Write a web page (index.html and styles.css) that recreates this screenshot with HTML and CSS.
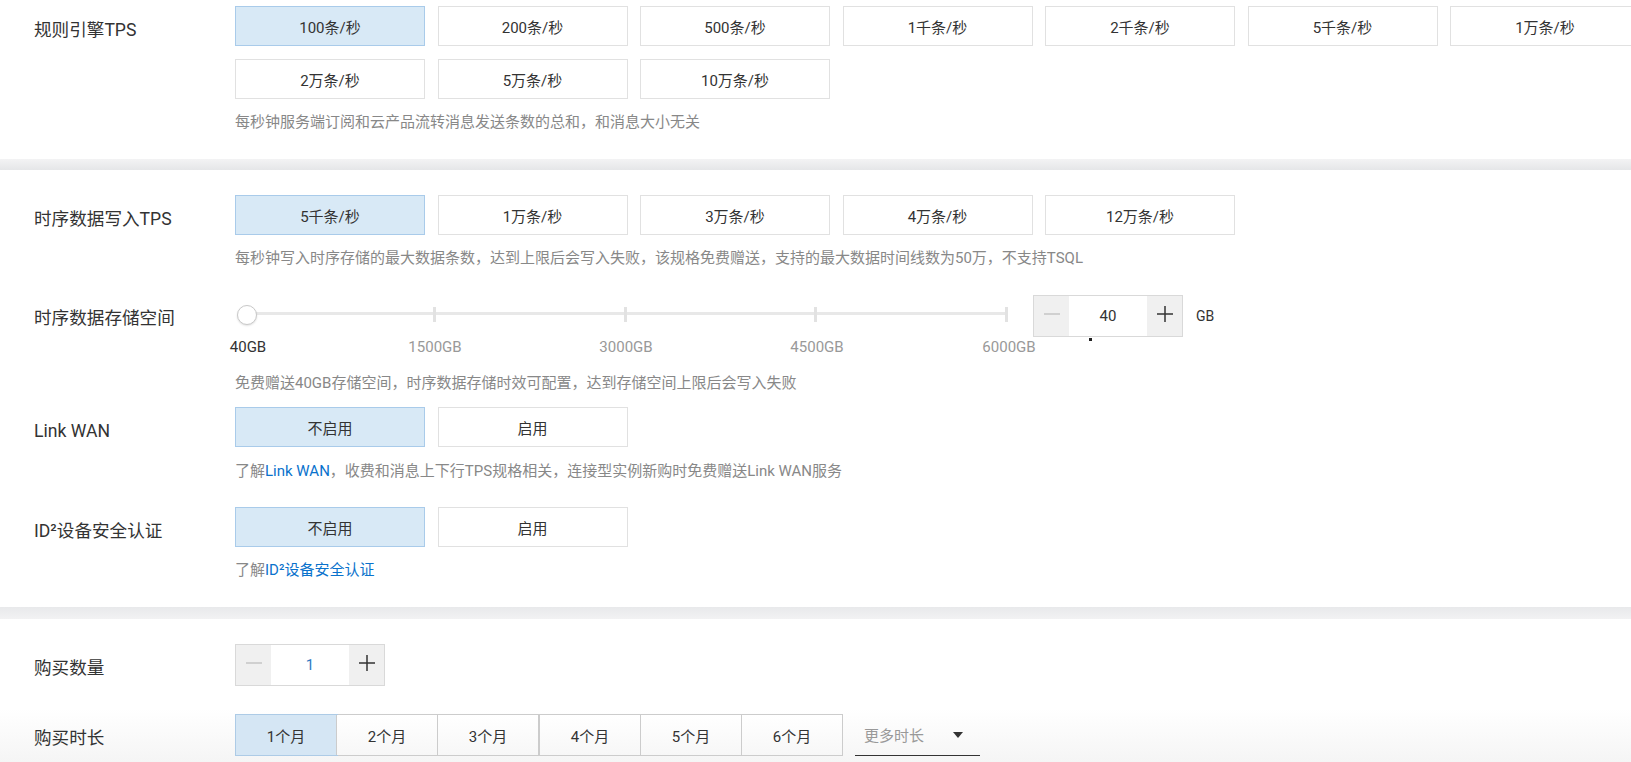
FILE: index.html
```html
<!DOCTYPE html>
<html lang="zh-CN">
<head>
<meta charset="utf-8">
<title>规格配置</title>
<link rel="stylesheet" href="styles.css">
</head>
<body>
<div class="page">

  <section class="card card-top">
    <div class="row">
      <div class="label">规则引擎TPS</div>
      <div class="field">
        <div class="options">
          <div class="opt on">100条/秒</div>
          <div class="opt">200条/秒</div>
          <div class="opt">500条/秒</div>
          <div class="opt">1千条/秒</div>
          <div class="opt">2千条/秒</div>
          <div class="opt">5千条/秒</div>
          <div class="opt">1万条/秒</div>
          <div class="opt">2万条/秒</div>
          <div class="opt">5万条/秒</div>
          <div class="opt">10万条/秒</div>
        </div>
        <p class="help">每秒钟服务端订阅和云产品流转消息发送条数的总和，和消息大小无关</p>
      </div>
    </div>
  </section>

  <div class="band band-a"></div>

  <section class="card">
    <div class="row">
      <div class="label">时序数据写入TPS</div>
      <div class="field">
        <div class="options">
          <div class="opt on">5千条/秒</div>
          <div class="opt">1万条/秒</div>
          <div class="opt">3万条/秒</div>
          <div class="opt">4万条/秒</div>
          <div class="opt">12万条/秒</div>
        </div>
        <p class="help">每秒钟写入时序存储的最大数据条数，达到上限后会写入失败，该规格免费赠送，支持的最大数据时间线数为50万，不支持TSQL</p>
      </div>
    </div>

    <div class="row row-slider">
      <div class="label label-slim">时序数据存储空间</div>
      <div class="field">
        <div class="slider-line">
          <div class="slider">
            <div class="track">
              <span class="tick t25"></span>
              <span class="tick t50"></span>
              <span class="tick t75"></span>
              <span class="tick t100"></span>
            </div>
            <span class="handle"></span>
            <span class="mark m0 cur">40GB</span>
            <span class="mark m1">1500GB</span>
            <span class="mark m2">3000GB</span>
            <span class="mark m3">4500GB</span>
            <span class="mark m4">6000GB</span>
          </div>
          <div class="stepper stepper-gb">
            <div class="step-btn">
              <svg width="16" height="16" viewBox="0 0 16 16"><path d="M0 8h16" stroke="#d0d0d0" stroke-width="2"/></svg>
            </div>
            <div class="step-val">40</div>
            <div class="step-btn">
              <svg width="16" height="16" viewBox="0 0 16 16"><path d="M0 8h16M8 0v16" stroke="#333" stroke-width="1.5"/></svg>
            </div>
            <span class="cursor-dot"></span>
          </div>
          <span class="unit">GB</span>
        </div>
        <p class="help help-slider">免费赠送40GB存储空间，时序数据存储时效可配置，达到存储空间上限后会写入失败</p>
      </div>
    </div>

    <div class="row row-link">
      <div class="label">Link WAN</div>
      <div class="field">
        <div class="options">
          <div class="opt on">不启用</div>
          <div class="opt">启用</div>
        </div>
        <p class="help help-link">了解<a class="link" href="#">Link WAN</a>，收费和消息上下行TPS规格相关，连接型实例新购时免费赠送Link WAN服务</p>
      </div>
    </div>

    <div class="row row-id">
      <div class="label">ID²设备安全认证</div>
      <div class="field">
        <div class="options">
          <div class="opt on">不启用</div>
          <div class="opt">启用</div>
        </div>
        <p class="help">了解<a class="link" href="#">ID²设备安全认证</a></p>
      </div>
    </div>
  </section>

  <div class="band band-b"></div>

  <section class="card card-buy">
    <div class="row">
      <div class="label label-buy">购买数量</div>
      <div class="field">
        <div class="stepper">
          <div class="step-btn">
            <svg width="16" height="16" viewBox="0 0 16 16"><path d="M0 8h16" stroke="#d0d0d0" stroke-width="2"/></svg>
          </div>
          <div class="step-val step-val-blue">1</div>
          <div class="step-btn">
            <svg width="16" height="16" viewBox="0 0 16 16"><path d="M0 8h16M8 0v16" stroke="#333" stroke-width="1.5"/></svg>
          </div>
        </div>
      </div>
    </div>

    <div class="row row-months">
      <div class="label label-buy">购买时长</div>
      <div class="field">
        <div class="months">
          <div class="mgroup">
            <div class="mbtn on">1个月</div>
            <div class="mbtn">2个月</div>
            <div class="mbtn">3个月</div>
          </div>
          <div class="mgroup">
            <div class="mbtn">4个月</div>
            <div class="mbtn">5个月</div>
            <div class="mbtn">6个月</div>
          </div>
          <div class="more">
            <span class="more-text">更多时长</span>
            <span class="caret"></span>
          </div>
        </div>
      </div>
    </div>
  </section>

</div>
</body>
</html>
```

FILE: styles.css
```css
* {
  box-sizing: border-box;
}

html,
body {
  margin: 0;
  padding: 0;
}

body {
  width: 1631px;
  height: 762px;
  overflow: hidden;
  background: #fff;
  color: #333;
  font-family: Roboto, "Noto Sans CJK SC", sans-serif;
}

.page {
  width: 1631px;
  overflow: hidden;
}

.card {
  background: #fff;
  padding: 25px 0 27px 34px;
}

.card-top {
  padding-top: 6px;
}

.band {
  height: 11px;
}

.band-a {
  background: linear-gradient(#f3f3f4, #e5e6e8);
}

.band-b {
  height: 12px;
  background: linear-gradient(#e8e9eb, #f2f2f3);
}

.row {
  display: grid;
  grid-template-columns: 201px auto;
  align-items: start;
}

.label {
  font-size: 17.6px;
  line-height: 40px;
  padding-top: 4px;
  white-space: nowrap;
  color: #333;
}

.label-slim {
  padding-top: 3px;
}

.label-buy {
  line-height: 42px;
  padding-top: 3px;
}

.options {
  display: flex;
  flex-wrap: wrap;
  column-gap: 12.5px;
  row-gap: 13px;
  width: 1420px;
}

.opt {
  width: 190px;
  height: 40px;
  border: 1px solid #e1e1e1;
  background: #fff;
  font-size: 15px;
  color: #333;
  display: flex;
  align-items: center;
  justify-content: center;
}

.opt.on {
  background: #d8e9f6;
  border-color: #a9cbea;
}

.help {
  margin: 13px 0 0;
  font-size: 15px;
  line-height: 20px;
  color: #888;
  white-space: nowrap;
}

.help-slider {
  margin-top: 16px;
}

.help-link {
  margin-top: 14px;
}

.link {
  color: #0a72cc;
  text-decoration: none;
}

.row-slider {
  margin-top: 27px;
}

.row-link {
  margin-top: 14px;
}

.row-id {
  margin-top: 26px;
}

/* slider */
.slider-line {
  display: flex;
  align-items: flex-start;
}

.slider {
  position: relative;
  width: 778px;
  height: 62px;
  flex: none;
}

.track {
  position: absolute;
  left: 9px;
  width: 762px;
  top: 17px;
  height: 3px;
  background: #e8e8e8;
}

.tick {
  position: absolute;
  top: -5px;
  width: 3px;
  height: 15px;
  margin-left: -1.5px;
  background: #e2e2e2;
}

.t25 { left: 25%; }
.t50 { left: 50%; }
.t75 { left: 75%; }
.t100 { left: 100%; }

.handle {
  position: absolute;
  left: 2px;
  top: 10px;
  width: 20px;
  height: 20px;
  border-radius: 50%;
  background: #fff;
  border: 1px solid #c9c9c9;
  box-shadow: 0 1px 2px rgba(0, 0, 0, 0.12);
}

.mark {
  position: absolute;
  top: 42px;
  font-size: 15px;
  line-height: 20px;
  color: #999;
  transform: translateX(-50%);
  white-space: nowrap;
}

.mark.cur {
  color: #333;
}

.m0 { left: 13px; }
.m1 { left: 200px; }
.m2 { left: 391px; }
.m3 { left: 582px; }
.m4 { left: 774px; }

/* stepper */
.stepper {
  position: relative;
  display: flex;
  width: 150px;
  height: 42px;
  border: 1px solid #d9d9d9;
  background: #fff;
}

.stepper-gb {
  margin-left: 20px;
}

.step-btn {
  width: 35px;
  flex: none;
  background: #f0f0f0;
  display: flex;
  align-items: center;
  justify-content: center;
}

.step-btn svg {
  display: block;
  margin-top: -5px;
}

.step-val {
  flex: 1;
  text-align: center;
  font-size: 15px;
  line-height: 40px;
  color: #333;
}

.step-val-blue {
  color: #2f7bc4;
}

.cursor-dot {
  position: absolute;
  left: 55px;
  top: 42px;
  width: 3px;
  height: 3px;
  background: #222;
}

.unit {
  margin-left: 13px;
  font-size: 14px;
  line-height: 42px;
  color: #333;
}

/* purchase */
.card-buy {
  padding-bottom: 9px;
  background: linear-gradient(#fff 0, #fff 90px, #f4f4f4 100%);
}

.row-months {
  margin-top: 25px;
}

.months {
  display: flex;
  align-items: flex-start;
}

.mgroup {
  display: flex;
  border: 1px solid #cccccc;
  border-right: 0;
  height: 42px;
}

.mbtn {
  width: 101px;
  height: 40px;
  border-right: 1px solid #cccccc;
  background: linear-gradient(#fff, #f7f7f7);
  font-size: 15px;
  color: #333;
  display: flex;
  align-items: center;
  justify-content: center;
}

.mbtn.on {
  background: #d5e6f4;
  box-shadow: 0 0 0 1px #adcbe6;
}

.more {
  margin-left: 12px;
  width: 125px;
  height: 42px;
  border-bottom: 1px solid #333;
  display: flex;
  align-items: center;
  justify-content: space-between;
  padding: 0 17px 0 9px;
}

.more-text {
  font-size: 15px;
  color: #999;
}

.caret {
  width: 0;
  height: 0;
  border-left: 5.5px solid transparent;
  border-right: 5.5px solid transparent;
  border-top: 6px solid #333;
}
```
